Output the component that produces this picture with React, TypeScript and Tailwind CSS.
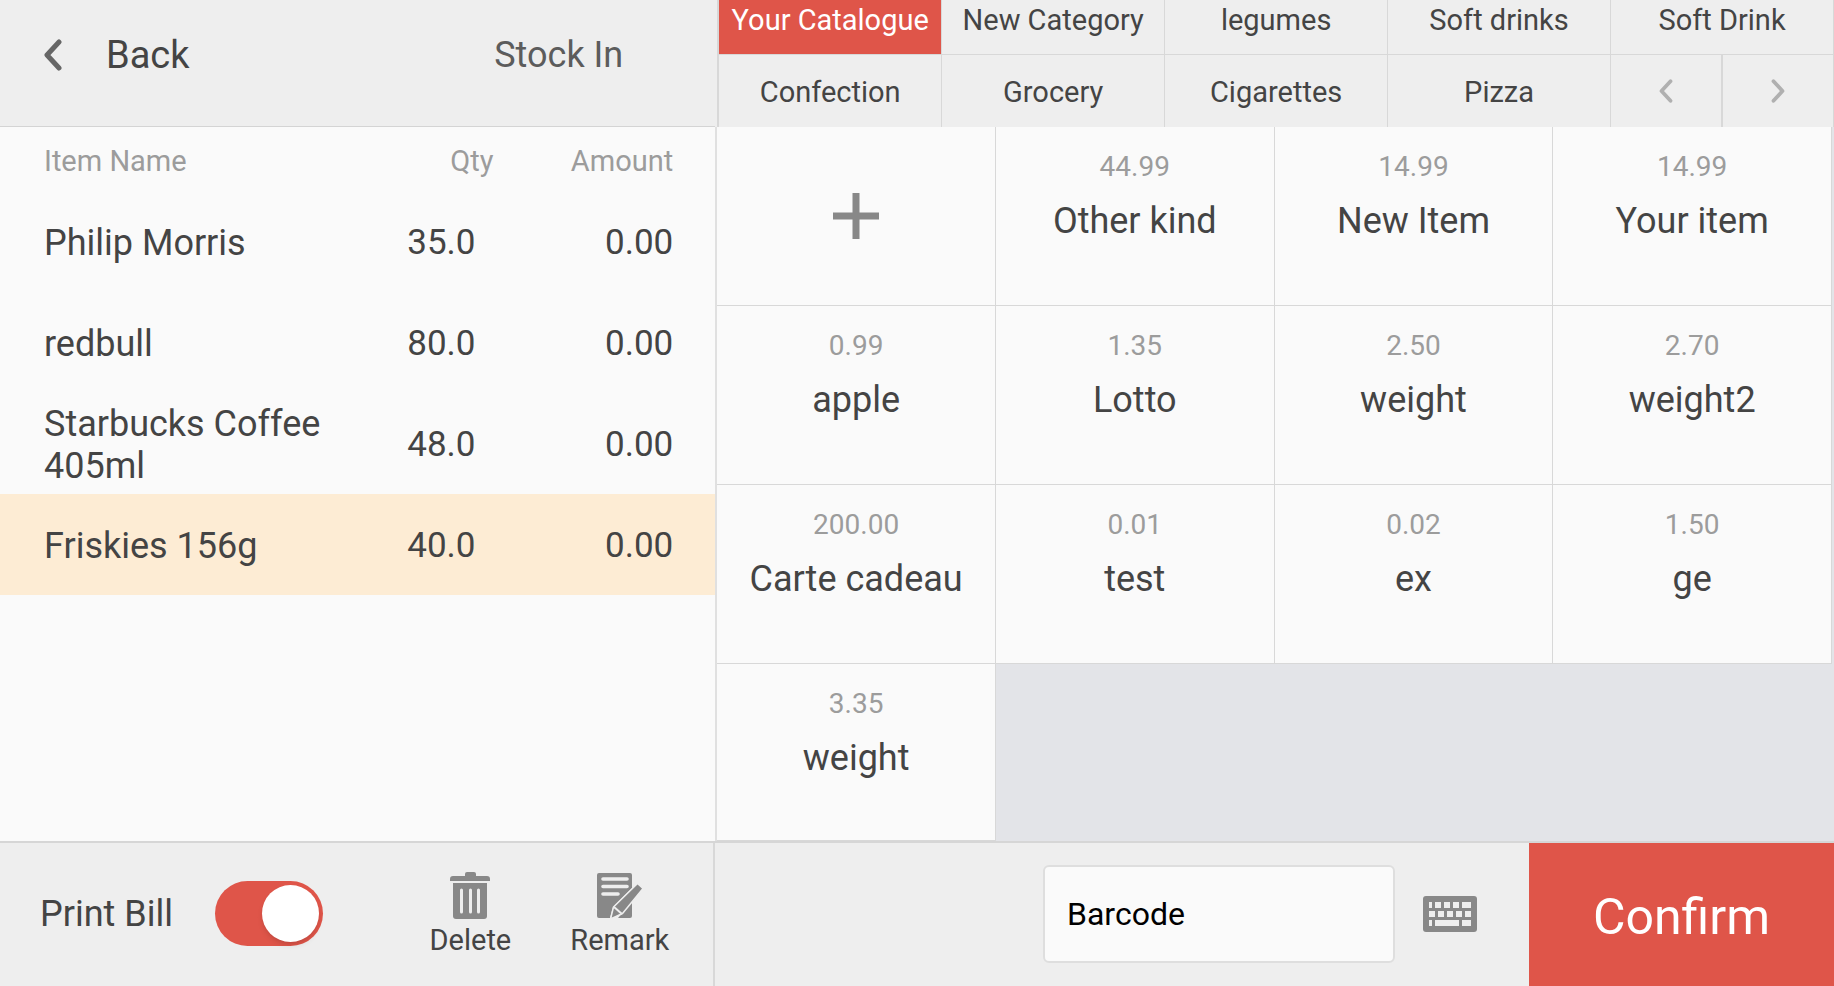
import React, { useState } from 'react';

const catalogueRow = ['Your Catalogue', 'New Category', 'legumes', 'Soft drinks', 'Soft Drink'];
const categoryRow = ['Confection', 'Grocery', 'Cigarettes', 'Pizza'];

const stockLines = [
  { name: 'Philip Morris', qty: '35.0', amount: '0.00' },
  { name: 'redbull', qty: '80.0', amount: '0.00' },
  { name: 'Starbucks Coffee 405ml', qty: '48.0', amount: '0.00' },
  { name: 'Friskies 156g', qty: '40.0', amount: '0.00' },
];

const products = [
  { name: 'Other kind', price: '44.99' },
  { name: 'New Item', price: '14.99' },
  { name: 'Your item', price: '14.99' },
  { name: 'apple', price: '0.99' },
  { name: 'Lotto', price: '1.35' },
  { name: 'weight', price: '2.50' },
  { name: 'weight2', price: '2.70' },
  { name: 'Carte cadeau', price: '200.00' },
  { name: 'test', price: '0.01' },
  { name: 'ex', price: '0.02' },
  { name: 'ge', price: '1.50' },
  { name: 'weight', price: '3.35' },
];

const Chevron: React.FC<{ className: string; right?: boolean }> = ({ className, right }) => (
  <svg viewBox="0 0 18 32" className={className} fill="none" stroke="currentColor" strokeWidth="5" strokeLinecap="round" strokeLinejoin="round" aria-hidden="true">
    <path d={right ? 'M3 3 15 16 3 29' : 'M15 3 3 16 15 29'} />
  </svg>
);

const TrashIcon = () => (
  <svg viewBox="0 0 40 48" className="h-12 w-10" aria-hidden="true">
    <path fill="#888" d="M15 4V2q0-2 2-2h7q2 0 2 2v2h11q3 0 3 3v2H0V7q0-3 3-3z" />
    <path fill="#888" d="M3 11h34v33q0 3-3 3H6q-3 0-3-3z" />
    <path stroke="#eee" strokeWidth="3" strokeLinecap="round" d="M11.5 18v22M20.5 18v22M28.5 18v22" />
  </svg>
);

const RemarkIcon = () => (
  <svg viewBox="0 0 46 48" className="h-12 w-[46px]" aria-hidden="true">
    <path fill="#888" d="M2 1h31q2 0 2 2v13L16 35l-3 11H2q-2 0-2-2V3q0-2 2-2z" />
    <path stroke="#eee" strokeWidth="3.6" strokeLinecap="round" d="M6 7h24M6 14.5h24M6 22h15" />
    <path fill="#888" d="M35 30v14q0 2-2 2H21z" />
    <path fill="#888" stroke="#eee" strokeWidth="1.5" strokeLinejoin="round" d="M40.500 11.500 46 16.500 25.500 41.500 13.500 47 16.500 35z" />
    <path stroke="#eee" strokeWidth="2" d="m17 35 8 7" />
  </svg>
);

const KeyboardIcon = () => (
  <svg viewBox="0 0 54 36" className="h-9 w-[54px]" aria-hidden="true">
    <rect width="54" height="36" rx="3" fill="#888" />
    <path
      fill="#eee"
      d="M6 6h3v6H6zM12 6h6v6h-6zM21 6h6v6h-6zM30 6h6v6h-6zM39 6h9v6h-9zM6 15h6v6H6zM15 15h6v6h-6zM24 15h6v6h-6zM33 15h6v6h-6zM42 15h6v6h-6zM6 24h3v6H6zM12 24h24v6H12zM39 24h9v6h-9z"
    />
  </svg>
);

const Header: React.FC = () => {
  const [active, setActive] = useState('Your Catalogue');

  const renderTab = (label: string) => (
    <button
      key={label}
      type="button"
      onClick={() => setActive(label)}
      className={`h-full border-r border-[#d8d8d8] pt-0.5 text-[29px] leading-8 whitespace-nowrap ${
        active === label ? 'bg-[#df5549] text-white' : ''
      }`}
    >
      {label}
    </button>
  );

  return (
    <header className="flex h-[127px] bg-[#eee]">
      <div className="flex w-[39%] shrink-0 items-center justify-between border-b border-[#d4d4d4] pr-[92px] pb-4 pl-11">
        <button type="button" className="flex items-center text-[38px] leading-10">
          <Chevron className="mr-11 h-8 w-[18px] text-[#666]" />
          Back
        </button>
        <h1 className="text-4xl text-[#5c5c5c]">Stock In</h1>
      </div>
      <nav className="ml-0.5 flex grow flex-col justify-end overflow-hidden border-l-2 border-[#d8d8d8]">
        <div className="grid h-18 shrink-0 grid-cols-5 border-b border-[#d8d8d8]">{catalogueRow.map(renderTab)}</div>
        <div className="grid h-18 shrink-0 grid-cols-5">
          {categoryRow.map(renderTab)}
          <div className="grid grid-cols-2 text-[#b0b0b0]">
            <button type="button" aria-label="Previous categories" className="flex items-center justify-center border-r-2 border-[#d8d8d8]">
              <Chevron className="h-6 w-3.5" />
            </button>
            <button type="button" aria-label="Next categories" className="flex items-center justify-center border-r border-[#d8d8d8]">
              <Chevron right className="h-6 w-3.5" />
            </button>
          </div>
        </div>
      </nav>
    </header>
  );
};

const StockTable: React.FC = () => (
  <section className="w-[39%] shrink-0 bg-[#fafafa]">
    <table className="w-full table-fixed border-collapse">
      <thead>
        <tr className="h-16 text-[29px] leading-8 text-[#9c9c9c]">
          <th className="w-[52%] pt-1 pl-11 text-left font-normal">Item Name</th>
          <th className="pt-1 text-right font-normal">Qty</th>
          <th className="w-[31%] pt-1 pr-[42px] text-right font-normal">Amount</th>
        </tr>
      </thead>
      <tbody>
        {stockLines.map((line, i) => (
          <tr key={line.name} className={`h-[101px] text-4xl ${i === stockLines.length - 1 ? 'bg-[#fdecd4]' : ''}`}>
            <td className="pt-0.5 pr-8 pl-11 leading-[42px]">{line.name}</td>
            <td className="pt-1 pr-[18px] text-right text-[35px]">{line.qty}</td>
            <td className="pt-1 pr-[42px] text-right text-[35px]">{line.amount}</td>
          </tr>
        ))}
      </tbody>
    </table>
  </section>
);

const ProductGrid: React.FC = () => (
  <section className="grow border-l-2 border-[#e0e0e0] bg-[#e3e4e8] pr-0.5">
    <div className="grid grid-cols-4 grid-rows-[repeat(3,179px)_177px]">
      <button type="button" aria-label="Add item" className="flex items-center justify-center border-r border-b border-[#d8d8d8] bg-[#fafafa]">
        <svg viewBox="0 0 46 46" className="h-[46px] w-[46px]" aria-hidden="true">
          <path stroke="#888" strokeWidth="7" d="M23 0v46M0 23h46" />
        </svg>
      </button>
      {products.map((item, i) => (
        <button key={i} type="button" className="flex flex-col items-center border-r border-b border-[#d8d8d8] bg-[#fafafa] pt-6">
          <span className="text-[28px] leading-8 text-[#9c9c9c]">{item.price}</span>
          <span className="mt-4 text-4xl leading-[44px]">{item.name}</span>
        </button>
      ))}
    </div>
  </section>
);

const Footer: React.FC = () => (
  <footer className="flex h-[145px] border-t-2 border-[#d6d6d6] bg-[#eee]">
    <div className="flex w-[39%] shrink-0 items-center justify-between border-r-2 border-[#d8d8d8] pr-11 pb-0.5 pl-10">
      <label className="flex items-center gap-[42px] text-4xl">
        Print Bill
        <input
          type="checkbox"
          role="switch"
          defaultChecked
          className="h-[65px] w-[108px] appearance-none rounded-full bg-[#bbb] p-1 before:block before:h-[57px] before:w-[57px] before:rounded-full before:bg-white before:shadow-md checked:bg-[#df5549] checked:before:ml-auto"
        />
      </label>
      <div className="flex gap-[59px] text-[29px] leading-8">
        <button type="button" className="flex flex-col items-center gap-1">
          <TrashIcon />
          Delete
        </button>
        <button type="button" className="flex flex-col items-center gap-1">
          <RemarkIcon />
          Remark
        </button>
      </div>
    </div>
    <div className="flex grow items-center justify-end gap-7 pr-[52px] pb-0.5">
      <input
        type="text"
        aria-label="Barcode"
        placeholder="Barcode"
        className="h-[98px] w-[352px] rounded-md border-2 border-[#dedede] bg-[#fafafa] px-[22px] text-[32px] text-black placeholder:text-black"
      />
      <button type="button" aria-label="Show keyboard">
        <KeyboardIcon />
      </button>
    </div>
    <button type="button" className="w-[305px] bg-[#df5549] pt-1.5 text-[50px] text-white">
      Confirm
    </button>
  </footer>
);

const App: React.FC = () => {
  return (
    <div className="flex min-h-screen flex-col bg-[#fafafa] font-['Roboto',sans-serif] text-[#444]">
      <Header />
      <main className="flex grow">
        <StockTable />
        <ProductGrid />
      </main>
      <Footer />
    </div>
  );
};

export default App;
